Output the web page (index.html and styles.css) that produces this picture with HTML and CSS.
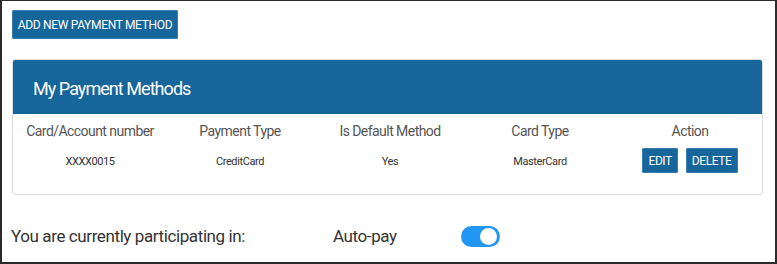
FILE: index.html
```html
<!DOCTYPE html>
<html>
<head>
<meta charset="utf-8">
<link rel="stylesheet" href="styles.css">
</head>
<body>
<div class="frame">
  <button class="btn btn-add">ADD NEW PAYMENT METHOD</button>
  <div class="card">
    <div class="card-head">My Payment Methods</div>
    <div class="table">
      <div class="th">Card/Account number</div>
      <div class="th">Payment Type</div>
      <div class="th">Is Default Method</div>
      <div class="th">Card Type</div>
      <div class="th">Action</div>
      <div class="td">XXXX0015</div>
      <div class="td">CreditCard</div>
      <div class="td">Yes</div>
      <div class="td">MasterCard</div>
      <div class="td actions"><button class="btn btn-sm">EDIT</button><button class="btn btn-sm">DELETE</button></div>
    </div>
  </div>
  <div class="autopay">
    <span class="ap-label">You are currently participating in:</span>
    <span class="ap-name">Auto-pay</span>
    <span class="toggle"><span class="knob"></span></span>
  </div>
</div>
</body>
</html>
```
FILE: styles.css
```css
* { box-sizing: border-box; }
html, body { margin: 0; padding: 0; background: #fff; }
body { font-family: Roboto, "Noto Sans", sans-serif; }
.frame {
  width: 777px;
  height: 264px;
  border-style: solid;
  border-color: #2b2b2b;
  border-width: 1px 2px 2px 2px;
  padding: 9px 0 0 10px;
  overflow: hidden;
}
.btn {
  font-family: Roboto, sans-serif;
  background: #16659b;
  color: #fff;
  border: 1px solid #3a7fb0;
  border-radius: 1px;
  cursor: pointer;
  padding: 0;
}
.btn-add {
  display: block;
  height: 29px;
  width: 166px;
  font-size: 12px;
  letter-spacing: -0.32px;
}
.card {
  margin-top: 20px;
  width: 751px;
  border: 1px solid #dcdcdc;
  border-radius: 3px;
  height: 136px;
}
.card-head {
  background: #16659b;
  color: #fff;
  height: 54px;
  font-size: 18px;
  letter-spacing: -0.95px;
  padding: 18px 0 0 20px;
  border-radius: 2px 2px 0 0;
}
.table {
  display: grid;
  grid-template-columns: repeat(5, 150px);
  padding-left: 2px;
  text-align: center;
}
.th {
  font-size: 14px;
  letter-spacing: -0.55px;
  color: #555;
  padding-top: 9px;
  height: 34px;
}
.td {
  font-size: 11px;
  letter-spacing: -0.4px;
  color: #333;
  padding-top: 7px;
}
.actions {
  display: flex;
  gap: 8px;
  justify-content: center;
  padding-top: 0;
  padding-left: 0;
  letter-spacing: 0;
}
.btn-sm {
  height: 25px;
  font-size: 12px;
  letter-spacing: -0.4px;
  padding: 0 5px;
}
.autopay {
  display: flex;
  align-items: center;
  margin-top: 30px;
  margin-left: -1px;
  font-size: 17px;
  letter-spacing: -0.4px;
  color: #333;
  height: 22px;
}
.ap-label { width: 322px; }
.ap-name { width: 128px; }
.toggle {
  position: relative;
  width: 39px;
  height: 21px;
  border-radius: 11px;
  background: #2196f3;
  display: inline-block;
}
.knob {
  position: absolute;
  right: 3px;
  top: 2px;
  width: 17px;
  height: 17px;
  border-radius: 50%;
  background: #fff;
}
```
